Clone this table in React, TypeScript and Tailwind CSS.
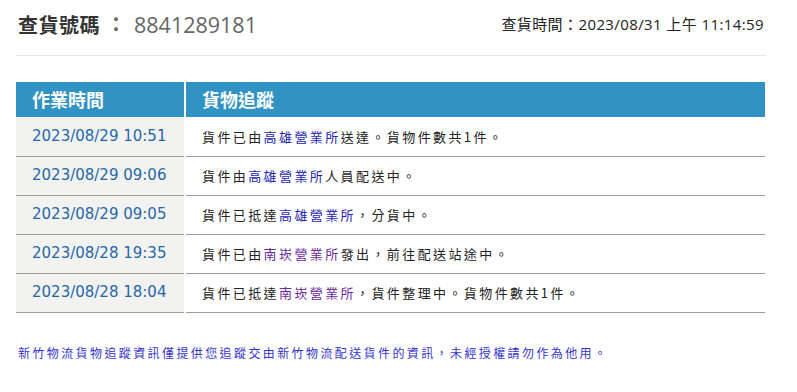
const rows = [
  { time: "2023/08/29 10:51", pre: "貨件已由", place: "高雄營業所", post: "送達。貨物件數共1件。", visited: false },
  { time: "2023/08/29 09:06", pre: "貨件由", place: "高雄營業所", post: "人員配送中。", visited: false },
  { time: "2023/08/29 09:05", pre: "貨件已抵達", place: "高雄營業所", post: "，分貨中。", visited: false },
  { time: "2023/08/28 19:35", pre: "貨件已由", place: "南崁營業所", post: "發出，前往配送站途中。", visited: true },
  { time: "2023/08/28 18:04", pre: "貨件已抵達", place: "南崁營業所", post: "，貨件整理中。貨物件數共1件。", visited: true },
];

export default function App() {
  return (
    <main className="w-[797px] h-[392px] bg-white font-['Open_Sans','Noto_Sans_CJK_TC',sans-serif] overflow-hidden">
      <div className="w-[750px] ml-4">
        <header className="flex items-center justify-between h-[56px] pb-[6px] border-b border-[#e6e6e6]">
          <h1 className="flex items-center ml-[2px] text-[20px] leading-none">
            <span className="font-['Noto_Sans_CJK_TC',sans-serif] font-bold text-[#333] tracking-[0.5px]">查貨號碼</span>
            <span className="text-[#666] font-semibold ml-[6px] mr-[8px]">：</span>
            <span className="text-[#666] text-[21.5px]">8841289181</span>
          </h1>
          <p className="text-[15px] tracking-[0.4px] text-[#222] mr-[2px]">
            <span className="font-['Noto_Sans_CJK_TC',sans-serif]">查貨時間：</span>2023/08/31 <span className="font-['Noto_Sans_CJK_TC',sans-serif]">上午</span> 11:14:59
          </p>
        </header>

        <table className="w-[749px] mt-[26px] border-collapse">
          <thead>
            <tr className="h-[35px] bg-[#3192c4] text-white text-[18px] font-['Noto_Sans_CJK_TC',sans-serif] font-bold">
              <th className="w-[169px] text-left pl-4 border-r-2 border-b border-white font-bold">作業時間</th>
              <th className="text-left pl-4 border-b border-white font-bold">貨物追蹤</th>
            </tr>
          </thead>
          <tbody>
            {rows.map((r) => (
              <tr key={r.time} className="h-[39px] border-b border-[#9c9c9c]">
                <td className="bg-[#f2f3f0] pl-4 text-[15px] text-[#2767a8] font-['DejaVu_Sans',sans-serif] border-r-2 border-white">
                  {r.time}
                </td>
                <td className="pl-4 text-[13px] tracking-[2.4px] text-[#222] font-['Noto_Sans_CJK_TC',sans-serif]">
                  {r.pre}
                  <a className={r.visited ? "text-[#6a2a9a]" : "text-[#2323b0]"}>{r.place}</a>
                  {r.post}
                </td>
              </tr>
            ))}
          </tbody>
        </table>

        <p className="mt-[31px] ml-[2px] text-[12px] tracking-[2.4px] text-[#3333cc] font-['Noto_Sans_CJK_TC',sans-serif]">
          新竹物流貨物追蹤資訊僅提供您追蹤交由新竹物流配送貨件的資訊，未經授權請勿作為他用。
        </p>
      </div>
    </main>
  );
}
